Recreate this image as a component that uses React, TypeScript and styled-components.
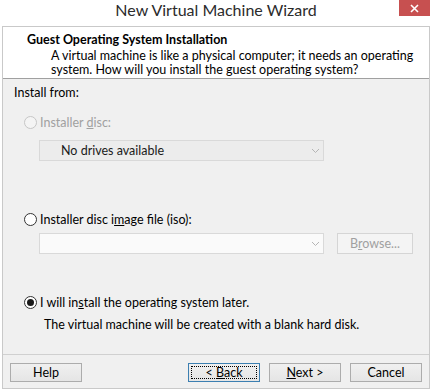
import React from "react";
import styled, { createGlobalStyle } from "styled-components";

const GlobalStyle = createGlobalStyle`
  html, body {
    margin: 0;
    padding: 0;
    background: #ffffff;
  }
  body {
    font-family: Lato, "Noto Sans", sans-serif;
    font-size: 12.5px;
    color: #000;
  }
`;

const Window = styled.div`
  width: 432px;
  height: 392px;
  display: flex;
  flex-direction: column;
  background: #ffffff;
  box-sizing: border-box;
`;

const TitleBar = styled.div`
  position: relative;
  height: 26px;
  display: flex;
  align-items: center;
  justify-content: center;
`;

const TitleText = styled.div`
  font-family: Lato, "Noto Sans", sans-serif;
  font-size: 16px;
  color: #2b2b2b;
  margin-top: -7px;
`;

const CloseButton = styled.div`
  position: absolute; /* window control over the caption */
  top: 0;
  right: 2px;
  width: 31px;
  height: 16px;
  background: #c75050;
  color: #fff;
  display: flex;
  align-items: center;
  justify-content: center;
`;

const Client = styled.div`
  flex: 1;
  margin: 0 2px 3px 2px;
  border: 1px solid #c9c9c9;
  display: flex;
  flex-direction: column;
  background: #f0f0f0;
`;

const Header = styled.div`
  height: 52px;
  background: #ffffff;
  border-bottom: 1px solid #a0a0a0;
  padding: 5px 0 0 24px;
  box-sizing: border-box;
`;

const HeaderTitle = styled.div`
  font-weight: 700;
  font-size: 12.5px;
  line-height: 16px;
`;

const HeaderText = styled.div`
  padding-left: 24px;
  line-height: 14px;
  margin-top: 1px;
`;

const Body = styled.div`
  flex: 1;
  display: flex;
  flex-direction: column;
  padding: 6px 0 0 11px;
`;

const Caption = styled.div`
  line-height: 15px;
`;

const RadioRow = styled.div<{ $disabled?: boolean; $top: number }>`
  display: flex;
  align-items: center;
  margin: ${({ $top }) => $top}px 0 0 10px;
  height: 15px;
  color: ${({ $disabled }) => ($disabled ? "#a0a0a0" : "#000")};
`;

const RadioCircle = styled.span<{ $disabled?: boolean; $checked?: boolean }>`
  width: 11px;
  height: 11px;
  border-radius: 50%;
  border: 1px solid ${({ $disabled }) => ($disabled ? "#c6c6c6" : "#333")};
  background: ${({ $disabled }) => ($disabled ? "#f4f4f4" : "#ffffff")};
  margin-right: 3px;
  display: flex;
  align-items: center;
  justify-content: center;

  &::after {
    content: "";
    display: ${({ $checked }) => ($checked ? "block" : "none")};
    width: 7px;
    height: 7px;
    border-radius: 50%;
    background: #1a1a1a;
  }
`;

const Underline = styled.span`
  text-decoration: underline;
`;

const FieldRow = styled.div<{ $top: number }>`
  display: flex;
  align-items: center;
  margin: ${({ $top }) => $top}px 0 0 25px;
`;

const Combo = styled.div<{ $light?: boolean }>`
  width: 285px;
  height: 21px;
  box-sizing: border-box;
  border: 1px solid #d9d9d9;
  background: ${({ $light }) => ($light ? "#fafafa" : "#ececec")};
  display: flex;
  align-items: center;
  justify-content: space-between;
  padding: 0 3px 0 21px;
  color: #1a1a1a;
`;

const Chevron = styled.svg`
  width: 9px;
  height: 6px;
`;

const Browse = styled.div`
  width: 76px;
  height: 21px;
  box-sizing: border-box;
  margin-left: 13px;
  border: 1px solid #d5d5d5;
  background: #f4f4f4;
  color: #a0a0a0;
  display: flex;
  align-items: center;
  justify-content: center;
`;

const Note = styled.div`
  margin: 7px 0 0 30px;
  line-height: 15px;
`;

const Footer = styled.div`
  border-top: 1px solid #d0d0d0;
  height: 34px;
  box-sizing: border-box;
  display: flex;
  align-items: flex-start;
  padding: 8px 7px 0 7px;
  gap: 9px;
`;

const Spacer = styled.div`
  flex: 1;
`;

const Button = styled.div<{ $default?: boolean }>`
  width: 72px;
  height: 19px;
  box-sizing: border-box;
  border: 1px solid ${({ $default }) => ($default ? "#3c7fb1" : "#acacac")};
  background: linear-gradient(#f0f0f0, #e5e5e5);
  display: flex;
  align-items: center;
  justify-content: center;
  position: relative;

  &::after {
    content: "";
    display: ${({ $default }) => ($default ? "block" : "none")};
    position: absolute;
    inset: 2px;
    border: 1px dotted #000;
  }
`;

const ChevronIcon = () => (
  <Chevron viewBox="0 0 9 6">
    <path d="M1 1 L4.5 4.5 L8 1" fill="none" stroke="#b5b5b5" strokeWidth="1" />
  </Chevron>
);

export default function App() {
  return (
    <>
      <GlobalStyle />
      <Window>
        <TitleBar>
          <TitleText>New Virtual Machine Wizard</TitleText>
          <CloseButton>
            <svg width="9" height="9" viewBox="0 0 9 9">
              <path d="M1 1 L8 8 M8 1 L1 8" stroke="#fff" strokeWidth="1.6" />
            </svg>
          </CloseButton>
        </TitleBar>
        <Client>
          <Header>
            <HeaderTitle>Guest Operating System Installation</HeaderTitle>
            <HeaderText>
              A virtual machine is like a physical computer; it needs an operating
              <br />
              system. How will you install the guest operating system?
            </HeaderText>
          </Header>
          <Body>
            <Caption>Install from:</Caption>
            <RadioRow $disabled $top={15}>
              <RadioCircle $disabled />
              <span>
                Installer <Underline>d</Underline>isc:
              </span>
            </RadioRow>
            <FieldRow $top={10}>
              <Combo>
                <span>No drives available</span>
                <ChevronIcon />
              </Combo>
            </FieldRow>
            <RadioRow $top={51}>
              <RadioCircle />
              <span>
                Installer disc i<Underline>m</Underline>age file (iso):
              </span>
            </RadioRow>
            <FieldRow $top={6}>
              <Combo $light>
                <span />
                <ChevronIcon />
              </Combo>
              <Browse>
                <span>
                  B<Underline>r</Underline>owse...
                </span>
              </Browse>
            </FieldRow>
            <RadioRow $top={41}>
              <RadioCircle $checked />
              <span>
                I will in<Underline>s</Underline>tall the operating system later.
              </span>
            </RadioRow>
            <Note>The virtual machine will be created with a blank hard disk.</Note>
          </Body>
          <Footer>
            <Button>Help</Button>
            <Spacer />
            <Button $default>
              <span>
                &lt; <Underline>B</Underline>ack
              </span>
            </Button>
            <Button>
              <span>
                <Underline>N</Underline>ext &gt;
              </span>
            </Button>
            <Button>Cancel</Button>
          </Footer>
        </Client>
      </Window>
    </>
  );
}
